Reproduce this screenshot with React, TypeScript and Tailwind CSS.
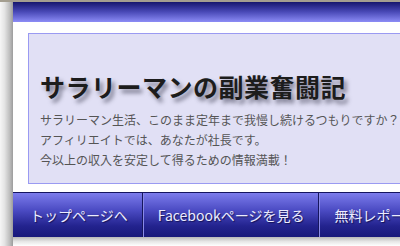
import React from "react";

export default function App() {
  const jp = { fontFamily: '"Noto Sans CJK JP", "Noto Sans", sans-serif' } as const;
  return (
    <div className="w-[400px] h-[246px] overflow-hidden bg-white flex flex-col" style={jp}>
      <div className="h-[2px] bg-[#a49e90] shrink-0" />
      <div className="flex flex-1 min-h-0">
        <div className="w-[13px] shrink-0 bg-[linear-gradient(to_right,#f6f6f6_0%,#e4e4e4_35%,#bdbdbd_75%,#9c9c9c_100%)]" />
        <div className="flex-1 min-w-0 flex flex-col">
          <div className="h-[20px] shrink-0 bg-[linear-gradient(to_bottom,#16166e_0%,#4a4ab8_50%,#8c8cf6_100%)]" />
          <div className="pl-[15px] pt-[11px] pb-[8px] bg-white">
            <div className="h-[151px] border border-[#9a9af2] border-r-0 bg-[#e1e0f5] pl-[11px] pt-[37px] whitespace-nowrap">
              <div className="text-[25px] leading-[30px] font-bold text-[#1c1c1c] tracking-[0.5px] [text-shadow:3px_4px_4px_rgba(40,40,60,0.55)]">
                サラリーマンの副業奮闘記
              </div>
              <div className="mt-[9px] text-[12px] leading-[20px] text-[#555555]">
                <div>サラリーマン生活、このまま定年まで我慢し続けるつもりですか？</div>
                <div>アフィリエイトでは、あなたが社長です。</div>
                <div>今以上の収入を安定して得るための情報満載！</div>
              </div>
            </div>
          </div>
          <div className="h-[45px] shrink-0 flex border-t border-[#141460] bg-[linear-gradient(to_bottom,#7c7cec_0%,#4a4ac2_40%,#23238e_75%,#18187a_100%)] whitespace-nowrap">
            <div className="flex items-center pl-[17px] pr-[14px] text-[14px] text-[#ececff] [text-shadow:1px_1px_1px_rgba(0,0,40,0.6)] border-r border-[#16165e]">
              トップページへ
            </div>
            <div className="flex items-center pl-[14px] pr-[14px] text-[14px] text-[#ececff] [text-shadow:1px_1px_1px_rgba(0,0,40,0.6)] border-l border-[#8a8ae8] border-r border-r-[#16165e]">
              Facebookページを見る
            </div>
            <div className="flex items-center pl-[14px] pr-[16px] text-[14px] text-[#ececff] [text-shadow:1px_1px_1px_rgba(0,0,40,0.6)] border-l border-[#8a8ae8]">
              無料レポート
            </div>
          </div>
          <div className="flex-1 bg-[linear-gradient(to_bottom,#b8b8b8_0%,#e6e6e6_50%,#ffffff_100%)]" />
        </div>
      </div>
    </div>
  );
}
